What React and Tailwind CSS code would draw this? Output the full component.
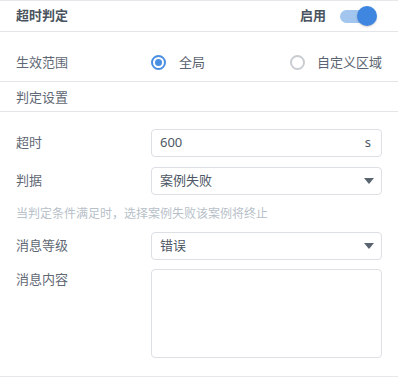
export default function App() {
  const font = { fontFamily: '"Noto Sans", "Noto Sans CJK SC", sans-serif' }
  return (
    <div style={font} className="w-[398px] h-[377px] bg-white text-[13px] text-[#5f6874] border-t border-b border-[#e6e8eb] flex flex-col">
      {/* header */}
      <div className="h-[31px] px-4 flex items-center justify-between border-b border-[#e3e5e8]">
        <span className="font-bold text-[#4a5460]">超时判定</span>
        <div className="flex items-center gap-[14px] pr-[8px]">
          <span className="font-bold text-[#4a5460]">启用</span>
          <div className="relative w-[34px] h-[13px] rounded-full bg-[#a3c6ef]">
            <div className="absolute -right-[3px] -top-[4px] w-[20px] h-[20px] rounded-full bg-[#3f86e0] shadow-[0_1px_2px_rgba(0,0,0,0.2)]"></div>
          </div>
        </div>
      </div>

      {/* scope */}
      <div className="h-[50px] pt-[12px] px-4 flex items-center border-b border-[#e3e5e8]">
        <span className="w-[135px]">生效范围</span>
        <label className="flex items-center gap-[13px] flex-1">
          <span className="w-[15px] h-[15px] rounded-full border-[2px] border-[#4a8fe2] flex items-center justify-center">
            <span className="w-[7px] h-[7px] rounded-full bg-[#4a8fe2]"></span>
          </span>
          <span className="text-[#5a6470]">全局</span>
        </label>
        <label className="flex items-center gap-[12px]">
          <span className="w-[15px] h-[15px] rounded-full border-[2px] border-[#c9cdd2]"></span>
          <span className="text-[#5a6470]">自定义区域</span>
        </label>
      </div>

      {/* section title */}
      <div className="h-[30px] pt-[2px] px-4 flex items-center border-b border-[#e3e5e8]">
        <span>判定设置</span>
      </div>

      {/* form */}
      <div className="flex flex-col px-4 pt-[17px]">
        <div className="flex items-center h-[28px]">
          <span className="w-[135px]">超时</span>
          <div className="flex-1 h-[28px] border border-[#dcdfe3] rounded-[4px] flex items-center justify-between px-[8px]">
            <span className="text-[#4e5864]">600</span>
            <span className="text-[#4e5864] pr-[2px]">s</span>
          </div>
        </div>
        <div className="flex items-center h-[28px] mt-[10px]">
          <span className="w-[135px]">判据</span>
          <div className="flex-1 h-[28px] border border-[#dcdfe3] rounded-[4px] flex items-center justify-between pl-[8px] pr-[7px]">
            <span className="text-[#4e5864]">案例失败</span>
            <svg width="10" height="6" viewBox="0 0 10 6"><path d="M0 0h10L5 6z" fill="#5a6470" /></svg>
          </div>
        </div>
        <div className="h-[37px] flex items-center text-[12px] text-[#b7bfc9]">
          当判定条件满足时，选择案例失败该案例将终止
        </div>
        <div className="flex items-center h-[28px]">
          <span className="w-[135px]">消息等级</span>
          <div className="flex-1 h-[28px] border border-[#dcdfe3] rounded-[4px] flex items-center justify-between pl-[8px] pr-[7px]">
            <span className="text-[#4e5864]">错误</span>
            <svg width="10" height="6" viewBox="0 0 10 6"><path d="M0 0h10L5 6z" fill="#5a6470" /></svg>
          </div>
        </div>
        <div className="flex items-start mt-[9px]">
          <span className="w-[135px] pt-[1px]">消息内容</span>
          <textarea className="flex-1 h-[89px] border border-[#dcdfe3] rounded-[4px] resize-none outline-none"></textarea>
        </div>
      </div>
    </div>
  )
}
